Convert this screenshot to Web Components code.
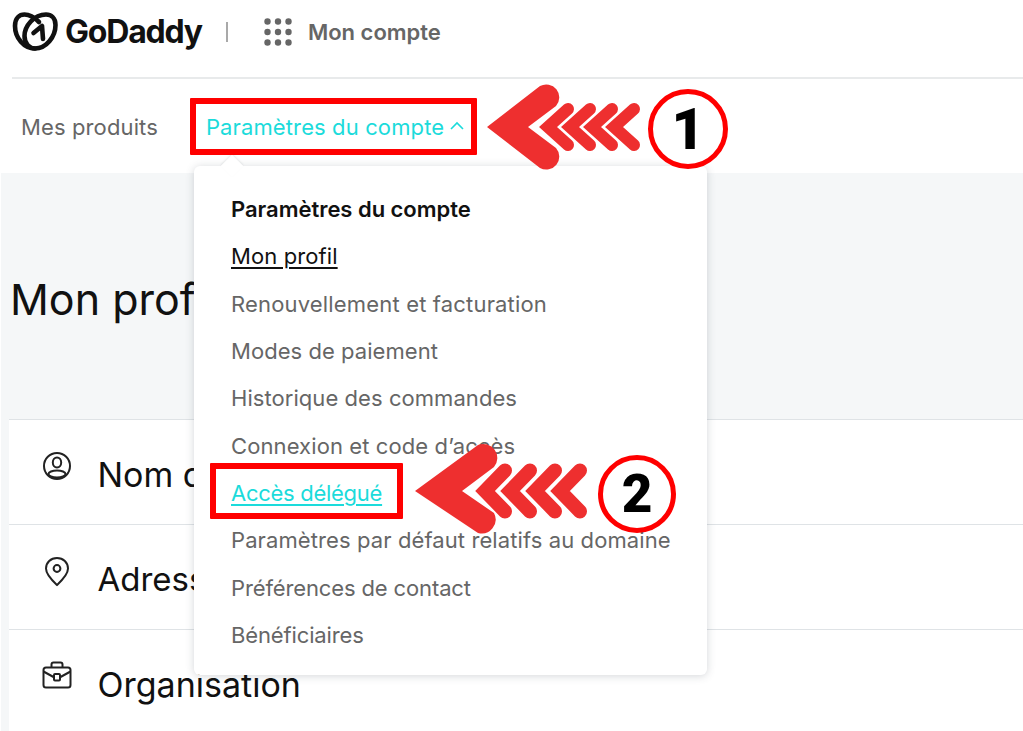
<!DOCTYPE html>
<html lang="fr">
<head>
<meta charset="utf-8">
<title>Mon profil</title>
<style>
  html, body { margin: 0; height: 731px; overflow: hidden; background: #fff; }
  body { position: relative; font-family: Inter, "Liberation Sans", sans-serif; }
</style>
</head>
<body>
<gd-header></gd-header>
<gd-nav></gd-nav>
<gd-main>
  <gd-row icon="user">Nom d</gd-row>
  <gd-row icon="pin" style="font-size:33px">Adresse</gd-row>
  <gd-row icon="case">Organisation</gd-row>
</gd-main>
<gd-menu>
  <gd-menu-item kind="title" style="--track:-.03px">Paramètres du compte</gd-menu-item>
  <gd-menu-item kind="current">Mon profil</gd-menu-item>
  <gd-menu-item style="--track:.17px">Renouvellement et facturation</gd-menu-item>
  <gd-menu-item style="--track:.05px">Modes de paiement</gd-menu-item>
  <gd-menu-item style="--track:.06px">Historique des commandes</gd-menu-item>
  <gd-menu-item>Connexion et code d’accès</gd-menu-item>
  <gd-menu-item kind="active" style="--track:-.28px">Accès délégué</gd-menu-item>
  <gd-menu-item>Paramètres par défaut relatifs au domaine</gd-menu-item>
  <gd-menu-item style="--track:-.13px">Préférences de contact</gd-menu-item>
  <gd-menu-item style="--track:-.13px">Bénéficiaires</gd-menu-item>
</gd-menu>
<gd-box style="left:190px;top:98px;width:287px;height:57px"></gd-box>
<gd-box style="left:210px;top:463px;width:193px;height:56px"></gd-box>
<gd-arrow variant="one"></gd-arrow>
<gd-arrow variant="two"></gd-arrow>
<gd-step style="left:648px;top:89px;width:80px;height:80px;font-size:57px">1</gd-step>
<gd-step style="left:598px;top:455px;width:78px;height:78px;font-size:53px">2</gd-step>

<script>
const icons = {
	user: `<circle cx="15" cy="15" r="13"/><ellipse cx="15" cy="11.5" rx="4.2" ry="5"/><ellipse cx="15" cy="23" rx="8.5" ry="3.6"/>`,
	pin: `<path d="M15 2C8.8 2 4 6.6 4 12.6 4 19 10.4 24.8 15 29 19.6 24.8 26 19 26 12.6 26 6.6 21.2 2 15 2Z"/><circle cx="15" cy="12.5" r="3.4"/>`,
	case: `<rect x="1.5" y="6.5" width="27" height="20" rx="2.5"/><path d="M9.5 6.5V3.5a2 2 0 0 1 2-2h7a2 2 0 0 1 2 2v3"/><path d="M1.5 10.5l10 5.5M28.5 10.5l-10 5.5"/><rect x="12" y="13" width="6" height="6.5" rx="1"/>`
};

class GdHeader extends HTMLElement {
	constructor() {
		super();
		let dots = '';
		for (let y = 0; y < 3; y++) {
			for (let x = 0; x < 3; x++) {
				dots += `<circle cx="${3.5 + x * 10.5}" cy="${3.5 + y * 10.5}" r="3.2"/>`;
			}
		}
		this.attachShadow({ mode: 'open' }).innerHTML = `
		<style>
			:host { display: flex; align-items: center; height: 79px; margin-left: 12px; box-sizing: border-box; border-bottom: 2px solid #e8eaeb; }
			.bar { display: flex; align-items: center; height: 64px; width: 100%; margin-top: -14px; }
			.logo { width: 46px; height: 41px; flex: none; }
			.word { font: 700 32px Inter, "Liberation Sans", sans-serif; color: #111; letter-spacing: -1.2px; margin-left: 7px; }
			.sep { width: 2px; height: 20px; background: #a9a9a9; margin: 0 36px 0 24px; }
			.apps { width: 28px; height: 28px; fill: #666; flex: none; }
			.name { font: 600 22px Inter, "Liberation Sans", sans-serif; color: #666; margin-left: 16px; }
		</style>
		<div class="bar">
			<svg class="logo" viewBox="0 0 46 41" fill="none" stroke="#111" stroke-width="4.6" stroke-linecap="round" stroke-linejoin="round">
				<path d="M23 37.5C12 37.5 3 27 3 15 3 7 7.5 3.5 12.5 3.5 18 3.5 23 7 27 11"/>
				<path d="M23 37.5C34 37.5 43.5 26 43.5 14 43.5 7 39 3.5 34 3.5 22 3.5 12.5 15 12.5 25 12.5 32 17 37.5 23 37.5Z"/>
				<path d="M21.5 22L30 15 31 28"/>
			</svg>
			<span class="word">GoDaddy</span>
			<span class="sep"></span>
			<svg class="apps" viewBox="0 0 28 28">${dots}</svg>
			<span class="name">Mon compte</span>
		</div>`;
	}
}

class GdNav extends HTMLElement {
	constructor() {
		super();
		this.attachShadow({ mode: 'open' }).innerHTML = `
		<style>
			:host { display: flex; align-items: center; height: 94px; padding: 2px 0 0 21px; box-sizing: border-box; font: 400 22px Inter, "Liberation Sans", sans-serif; letter-spacing: .12px; }
			.link { color: #666; }
			.open { color: #1bdbdb; margin-left: 48px; display: flex; align-items: center; gap: 6px; }
			svg { width: 14px; height: 9px; margin-top: -4px; }
		</style>
		<span class="link">Mes produits</span>
		<span class="open">Paramètres du compte
			<svg viewBox="0 0 14 9" fill="none" stroke="#1bdbdb" stroke-width="1.6"><path d="M1 8l6-6 6 6"/></svg>
		</span>`;
	}
}

class GdMain extends HTMLElement {
	constructor() {
		super();
		this.attachShadow({ mode: 'open' }).innerHTML = `
		<style>
			:host { display: block; height: 558px; margin-left: 1px; background: #f5f7f8; overflow: hidden; }
			h1 { margin: 0; padding: 96px 0 0 9px; height: 246px; box-sizing: border-box; font: 400 43px/60px Inter, "Liberation Sans", sans-serif; color: #111; }
			.card { margin-left: 8px; background: #fff; }
		</style>
		<h1>Mon profil</h1>
		<div class="card"><slot></slot></div>`;
	}
}

class GdRow extends HTMLElement {
	constructor() {
		super();
		const icon = this.getAttribute('icon');
		this.attachShadow({ mode: 'open' }).innerHTML = `
		<style>
			:host { display: flex; align-items: center; height: 105px; box-sizing: border-box; border-top: 1.5px solid #dfe3e6; padding: 4px 0 0 33px; font: 400 34px Inter, "Liberation Sans", sans-serif; color: #111; }
			svg { width: 30px; height: 31px; flex: none; margin: -16px 25.5px 0 0; fill: none; stroke: #222; stroke-width: 2; }
		</style>
		<svg viewBox="0 0 30 31">${icons[icon]}</svg><slot></slot>`;
	}
}

class GdMenu extends HTMLElement {
	constructor() {
		super();
		this.attachShadow({ mode: 'open' }).innerHTML = `
		<style>
			:host { position: absolute; left: 194px; top: 166px; width: 513px; height: 509px; box-sizing: border-box; padding: 20px 0 0 37px; background: #fff; border-radius: 6px; box-shadow: 0 1px 8px rgba(60,70,80,.22); }
			.tip { position: absolute; left: 30px; top: -8px; width: 16px; height: 16px; background: #fff; transform: rotate(45deg); box-shadow: -1px -1px 2px rgba(60,70,80,.1); }
		</style>
		<div class="tip"></div>
		<slot></slot>`;
	}
}

class GdMenuItem extends HTMLElement {
	constructor() {
		super();
		this.attachShadow({ mode: 'open' }).innerHTML = `
		<style>
			:host { display: block; position: relative; height: 47.35px; font: 400 22px/47.35px Inter, "Liberation Sans", sans-serif; letter-spacing: var(--track, .1px); color: #666; white-space: nowrap; }
			:host([kind="title"]) { font-weight: 600; color: #111; }
			:host([kind="current"]) { color: #111; text-decoration: underline; text-underline-offset: 3px; }
			:host([kind="active"]) { color: #1bdbdb; text-decoration: underline; text-underline-offset: 3px; }
		</style>
		<slot></slot>`;
	}
}

class GdBox extends HTMLElement {
	constructor() {
		super();
		this.attachShadow({ mode: 'open' }).innerHTML = `
		<style>
			:host { display: block; position: absolute; box-sizing: border-box; border: 6.5px solid #f00; border-radius: 1px; }
		</style>`;
	}
}

const arrows = {
	one: { left: 487, top: 84, w: 151, h: 84, big: 'M0 43L53 2A13 13 0 0 1 69 22L41 43 69 64A13 13 0 0 1 53 84Z', mid: 43, spread: 18, reach: 20, first: 61, step: 22, sw: 12 },
	two: { left: 415, top: 443, w: 172, h: 90, big: 'M0 48L63 2A14 14 0 0 1 79 24L47 48 79 70A14 14 0 0 1 63 90Z', mid: 48, spread: 20.5, reach: 20, first: 70, step: 25, sw: 14 }
};

class GdArrow extends HTMLElement {
	constructor() {
		super();
		const a = arrows[this.getAttribute('variant')];
		let lines = '';
		for (let i = 3; i >= 0; i--) {
			const x = a.first + i * a.step;
			lines += `<path d="M${x + a.reach} ${a.mid - a.spread}L${x} ${a.mid}L${x + a.reach} ${a.mid + a.spread}"/>`;
		}
		this.attachShadow({ mode: 'open' }).innerHTML = `
		<style>
			:host { display: block; position: absolute; left: ${a.left}px; top: ${a.top}px; width: ${a.w}px; height: ${a.h}px; }
			svg { display: block; overflow: visible; }
		</style>
		<svg width="${a.w}" height="${a.h}" viewBox="0 0 ${a.w} ${a.h}">
			<g fill="none" stroke="#ee2f2f" stroke-width="${a.sw}" stroke-linecap="round" stroke-miterlimit="6">${lines}</g>
			<path d="${a.big}" fill="#ee2f2f"/>
		</svg>`;
	}
}

class GdStep extends HTMLElement {
	constructor() {
		super();
		this.attachShadow({ mode: 'open' }).innerHTML = `
		<style>
			:host { display: flex; position: absolute; align-items: center; justify-content: center; box-sizing: border-box; background: #fff; border: 5px solid #f00; border-radius: 50%; font-family: Roboto, "Liberation Sans", sans-serif; font-weight: 900; color: #000; line-height: 1; }
		</style>
		<slot></slot>`;
	}
}

customElements.define('gd-header', GdHeader);
customElements.define('gd-nav', GdNav);
customElements.define('gd-main', GdMain);
customElements.define('gd-row', GdRow);
customElements.define('gd-menu', GdMenu);
customElements.define('gd-menu-item', GdMenuItem);
customElements.define('gd-box', GdBox);
customElements.define('gd-arrow', GdArrow);
customElements.define('gd-step', GdStep);
</script>
</body>
</html>
